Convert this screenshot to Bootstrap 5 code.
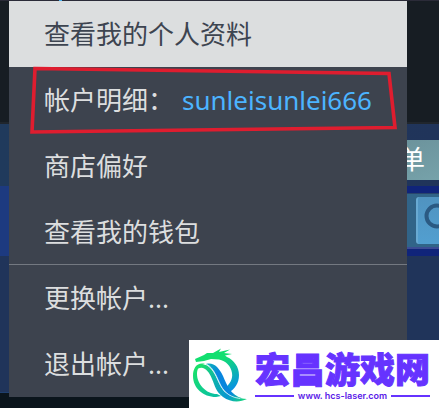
<!DOCTYPE html>
<html lang="zh-CN">
<head>
<meta charset="utf-8">
<meta name="viewport" content="width=device-width, initial-scale=1">
<title>帐户菜单</title>
<link href="https://cdn.jsdelivr.net/npm/bootstrap@5.3.0/dist/css/bootstrap.min.css" rel="stylesheet">
<style>
body { background: #0b151c; font-family: "Noto Sans", "Noto Sans CJK SC", sans-serif; }
.store { min-height: 100vh; }
.store-top { height: 124px; background: #171d23; border-top: 1px solid #2b2b38; border-bottom: 2px solid #20262d; }
.store-tick { width: 3px; height: 2px; margin-left: 59px; margin-top: -1px; background: #4cb4f0; }
.store-band { height: 62px; background: linear-gradient(90deg, #203a5c, #20345a); }
.wish { width: 32px; height: 40px; margin-top: 16px; background: linear-gradient(160deg, #6c939c, #76a2aa); color: #fff; font-size: 26px; line-height: 38px; direction: rtl; padding-right: 14px; text-decoration: none; }
.store-nav { height: 70px; background: linear-gradient(90deg, #1d3a80 50%, #10247a 50%); }
.finder { width: 32px; height: 56px; padding: 3px 0 3px 9px; background: #316488; border-top: 1px solid #28456c; border-bottom: 2px solid #3b4c94; }
.finder button { background: linear-gradient(#5093c0, #529fd0); border-left: 2px solid #68aad3 !important; border-radius: 3px 0 0 3px; }
.store-body { height: 137px; background: #20345a; border-bottom: 1px solid #1f3f6e; }
.account-menu { position: absolute; top: 1px; left: 9px; right: 32px; background: #3d434e; }
.account-menu a { height: 66px; padding-left: 35px; color: #dcdedf; font-size: 26px; line-height: 40px; text-decoration: none; white-space: pre; }
.account-menu a.current { background: #dcdedf; color: #3d4450; }
.account-menu hr { margin: -1px 0 0; border-top: 1px solid #747981; opacity: 1; }
.user-name { color: #4cb4ff; margin-left: 8px; }
.outline-mark { position: absolute; left: 20px; top: 62px; }
.site-mark { position: absolute; right: 0; bottom: 0; width: 250px; height: 68px; background: #fff; color: #6633ff; }
.site-name { font-family: "Noto Sans CJK SC", sans-serif; font-size: 35px; line-height: 40px; font-weight: 900; -webkit-text-stroke: 1px #6633ff; white-space: nowrap; }
.site-url { font-family: Inter, sans-serif; font-size: 9px; line-height: 12px; font-weight: 600; color: #5a20e8; white-space: nowrap; }
.site-line { padding-top: 2px; }
.rule { height: 2px; background: #6633ff; }
</style>
<script src="https://cdn.jsdelivr.net/npm/bootstrap@5.3.0/dist/js/bootstrap.bundle.min.js"></script>
</head>
<body>
<main class="store position-relative overflow-hidden">
  <div class="store-top"><div class="store-tick"></div></div>
  <div class="store-band d-flex justify-content-end"><a href="#" class="wish overflow-hidden">单</a></div>
  <div class="store-nav d-flex justify-content-end align-items-center">
    <div class="finder">
      <button type="button" class="border-0 w-100 h-100 p-0 d-flex align-items-center overflow-hidden" aria-label="搜索">
        <svg class="flex-shrink-0" width="34" height="40" viewBox="0 0 34 40" aria-hidden="true"><circle cx="19" cy="15" r="10.5" fill="none" stroke="#2b5a83" stroke-width="4"/><path d="M27 24l7 8" stroke="#2b5a83" stroke-width="4"/></svg>
      </button>
    </div>
  </div>
  <div class="store-body"></div>

  <nav class="account-menu d-flex flex-column">
    <a href="#" class="current d-flex align-items-center">查看我的个人资料</a>
    <a href="#" class="d-flex align-items-center">帐户明细：<span class="user-name">sunleisunlei666</span></a>
    <a href="#" class="d-flex align-items-center">商店偏好</a>
    <a href="#" class="d-flex align-items-center">查看我的钱包</a>
    <hr>
    <a href="#" class="d-flex align-items-center">更换帐户...</a>
    <a href="#" class="d-flex align-items-center">退出帐户...</a>
    <svg class="outline-mark" width="370" height="74" viewBox="0 0 370 74" aria-hidden="true"><path d="M6 5.500L360 10.500L366 64.500L3 69Z" fill="none" stroke="#df1d2f" stroke-width="3.600"/></svg>
  </nav>

  <aside class="site-mark d-flex align-items-start">
    <svg class="flex-shrink-0" width="66" height="68" viewBox="0 0 66 68" aria-hidden="true">
      <defs>
        <linearGradient id="ring" gradientUnits="userSpaceOnUse" x1="24" y1="14" x2="46" y2="50"><stop offset=".2" stop-color="#12df70"/><stop offset="1" stop-color="#078dea"/></linearGradient>
        <linearGradient id="loop" gradientUnits="userSpaceOnUse" x1="4" y1="28" x2="30" y2="58"><stop offset="0" stop-color="#1ae268"/><stop offset="1" stop-color="#08bda8"/></linearGradient>
        <linearGradient id="leaf" gradientUnits="userSpaceOnUse" x1="10" y1="25" x2="54" y2="60"><stop offset="0" stop-color="#1ce364"/><stop offset=".4" stop-color="#0bb0ae"/><stop offset=".75" stop-color="#0797d0"/><stop offset="1" stop-color="#16d283"/></linearGradient>
        <linearGradient id="edge" gradientUnits="userSpaceOnUse" x1="16" y1="24" x2="54" y2="60"><stop offset="0" stop-color="#0bb5b5"/><stop offset=".3" stop-color="#0785df"/><stop offset=".75" stop-color="#0787dc"/><stop offset="1" stop-color="#16d283"/></linearGradient>
      </defs>
      <path d="M6 19L15 15L18 13L24 13L32 8.500L30 12L41 9.500L35 13L43 14L36 15.500L38 17C45 20 50 27 50 35C50 43 46 49 39 53L36 48C41 44 44 39 43 33C42 26 37 21 30 19.500L22 19L15 21L7 22Z" fill="url(#ring)"/>
      <path d="M16 24C8 22 4 28 4 36C4 48 14 57 27 57L32 56L28 54C17 54 8 44 8 34C8 28 11 25 16 24Z" fill="url(#loop)"/>
      <path d="M7 30C9 24 15 23 20 27C26 32 28 40 32 47C36 54 42 58 58 59C50 63 41 62 34 57C27 52 26 46 23 39C20 31 14 24 7 30Z" fill="url(#leaf)"/>
      <path d="M17 24C25 22 30 28 34 36C38 45 41 55 54 58.500C42 58 36 53 32 46C28 38 25 28 17 24Z" fill="url(#edge)"/>
      <path d="M18 24.500C25 28 28 38 32 46C36 53 42 57.500 51 58.500" fill="none" stroke="#d6f3fa" stroke-width=".8"/>
    </svg>
    <div class="pt-2">
      <div class="site-name">宏昌游戏网</div>
      <div class="site-line d-flex align-items-center gap-1">
        <div class="rule flex-fill"></div><span class="site-url">www. hcs-laser.com</span><div class="rule flex-fill"></div>
      </div>
    </div>
  </aside>
</main>
</body>
</html>
